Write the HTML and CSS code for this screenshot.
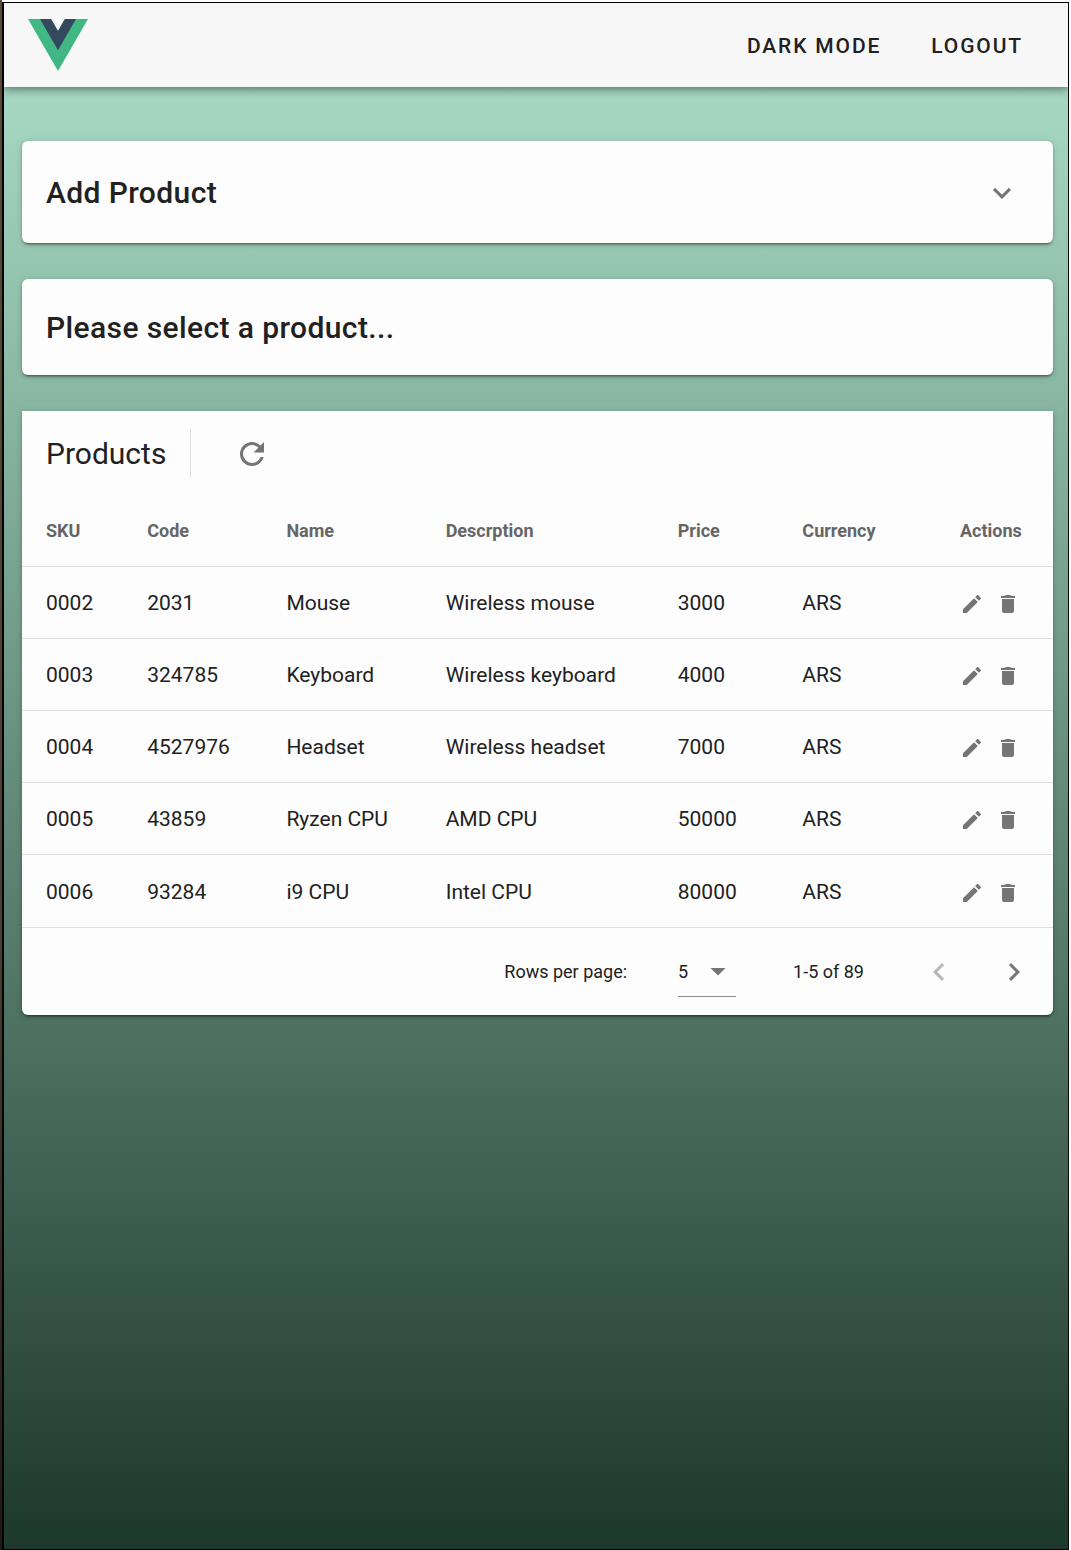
FILE: index.html
```
<!DOCTYPE html>
<html lang="en">
<head>
<meta charset="utf-8">
<title>Products</title>
<link rel="stylesheet" href="styles.css">
</head>
<body>
<svg width="0" height="0" class="sprite" aria-hidden="true">
  <symbol id="pencil" viewBox="0 0 24 24"><path d="M20.71,7.04C21.1,6.65 21.1,6 20.71,5.63L18.37,3.29C18,2.9 17.35,2.9 16.96,3.29L15.12,5.12L18.87,8.87M3,17.25V21H6.75L17.81,9.93L14.06,6.18L3,17.25Z"/></symbol>
  <symbol id="trash" viewBox="0 0 24 24"><path d="M19,4H15.5L14.5,3H9.5L8.5,4H5V6H19M6,19A2,2 0 0,0 8,21H16A2,2 0 0,0 18,19V7H6V19Z"/></symbol>
</svg>
<div class="app">
  <header class="bar">
    <svg class="logo" viewBox="0 0 261.76 226.69"><path fill="#41b883" d="M161.096.001l-30.225 52.351L100.647.001H-.005l130.877 226.688L261.749.001z"/><path fill="#34495e" d="M161.096.001l-30.225 52.351L100.647.001H52.346l78.526 136.01L209.398.001z"/></svg>
    <nav class="nav"><button>DARK MODE</button><button>LOGOUT</button></nav>
  </header>
  <main class="main">
    <section class="card add">
      <h2>Add Product</h2>
      <svg class="icon chev" viewBox="0 0 24 24"><path d="M7.41,8.58L12,13.17L16.59,8.58L18,10L12,16L6,10L7.41,8.58Z"/></svg>
    </section>
    <section class="card select-product"><h2>Please select a product...</h2></section>
    <section class="card products">
      <div class="toolbar">
        <div class="title">Products</div>
        <div class="divider"></div>
        <svg class="icon refresh" viewBox="0 0 24 24"><path d="M17.65,6.35C16.2,4.9 14.21,4 12,4A8,8 0 0,0 4,12A8,8 0 0,0 12,20C15.73,20 18.84,17.45 19.73,14H17.65C16.83,16.33 14.61,18 12,18A6,6 0 0,1 6,12A6,6 0 0,1 12,6C13.66,6 15.14,6.69 16.22,7.78L13,11H20V4L17.65,6.35Z"/></svg>
      </div>
      <table>
        <colgroup><col class="c1"><col class="c2"><col class="c3"><col class="c4"><col class="c5"><col class="c6"><col class="c7"></colgroup>
        <thead><tr><th>SKU</th><th>Code</th><th>Name</th><th>Descrption</th><th>Price</th><th>Currency</th><th>Actions</th></tr></thead>
        <tbody>
          <tr><td>0002</td><td>2031</td><td>Mouse</td><td>Wireless mouse</td><td>3000</td><td>ARS</td><td><div class="actions"><svg><use href="#pencil"/></svg><svg><use href="#trash"/></svg></div></td></tr>
          <tr><td>0003</td><td>324785</td><td>Keyboard</td><td>Wireless keyboard</td><td>4000</td><td>ARS</td><td><div class="actions"><svg><use href="#pencil"/></svg><svg><use href="#trash"/></svg></div></td></tr>
          <tr><td>0004</td><td>4527976</td><td>Headset</td><td>Wireless headset</td><td>7000</td><td>ARS</td><td><div class="actions"><svg><use href="#pencil"/></svg><svg><use href="#trash"/></svg></div></td></tr>
          <tr><td>0005</td><td>43859</td><td>Ryzen CPU</td><td>AMD CPU</td><td>50000</td><td>ARS</td><td><div class="actions"><svg><use href="#pencil"/></svg><svg><use href="#trash"/></svg></div></td></tr>
          <tr class="last"><td>0006</td><td>93284</td><td>i9 CPU</td><td>Intel CPU</td><td>80000</td><td>ARS</td><td><div class="actions"><svg><use href="#pencil"/></svg><svg><use href="#trash"/></svg></div></td></tr>
        </tbody>
      </table>
      <footer class="pager">
        <span>Rows per page:</span>
        <div class="rows"><span>5</span><svg class="icon" viewBox="0 0 24 24"><path d="M7,10L12,15L17,10H7Z"/></svg></div>
        <span class="range">1-5 of 89</span>
        <svg class="icon prev" viewBox="0 0 24 24"><path d="M15.41,16.58L10.83,12L15.41,7.41L14,6L8,12L14,18L15.41,16.58Z"/></svg>
        <svg class="icon next" viewBox="0 0 24 24"><path d="M8.59,16.58L13.17,12L8.59,7.41L10,6L16,12L10,18L8.59,16.58Z"/></svg>
      </footer>
    </section>
  </main>
</div>
</body>
</html>
```
FILE: styles.css
```
* { box-sizing: border-box; }
html { height: 100%; background: #fff; }
body {
  margin: 0;
  height: 1550px;
  padding-top: 2px;
  overflow: hidden;
  font-family: Roboto, "Liberation Sans", sans-serif;
  color: #212121;
  background: linear-gradient(180deg, #5a4c36 0, #4a4030 60%, #1c1a18 100%) 0 0 / 2px 100% no-repeat;
}
.sprite { display: block; height: 0; }
.app {
  margin-left: 2px;
  width: 1067px;
  height: 1548px;
  border: 1px solid #000;
  border-left-width: 2px;
  overflow: hidden;
  background: linear-gradient(180deg, #a6dac4 0, #a4d6c0 110px, #1d382d 100%);
}
.bar {
  height: 84px;
  padding: 0 21px 0 24px;
  display: flex;
  align-items: center;
  justify-content: space-between;
  background: #f7f7f8;
  box-shadow: 0 3px 6px -1px rgba(0,0,0,.3), 0 6px 8px rgba(0,0,0,.1), 0 1px 12px rgba(0,0,0,.08);
}
.logo { width: 60px; height: 52px; }
.nav { display: flex; gap: 2px; }
button {
  border: 0;
  background: none;
  height: 54px;
  padding: 2px 24px 0;
  font: 500 21px Roboto, sans-serif;
  letter-spacing: 1.875px;
  color: #212121;
}
.main { padding: 54px 15px 0 18px; }
.card {
  background: #fdfdfd;
  border-radius: 6px;
  box-shadow: 0 4px 2px -3px rgba(0,0,0,.3), 0 2px 3px rgba(0,0,0,.22), 0 1px 7px rgba(0,0,0,.14);
}
h2 {
  margin: 0;
  padding-top: 1px;
  font-size: 30px;
  font-weight: 500;
  letter-spacing: .39px;
  line-height: 48px;
}
.icon { width: 36px; height: 36px; fill: #757575; flex: none; }
.add {
  height: 102px;
  padding: 1px 33px 0 24px;
  margin-bottom: 36px;
  display: flex;
  align-items: center;
  justify-content: space-between;
}
.select-product { height: 96px; padding: 24px; margin-bottom: 36px; }
.products { border-radius: 0 0 6px 6px; height: 604px; }
.toolbar { height: 84px; display: flex; align-items: center; padding-left: 24px; }
.title { font-size: 30px; }
.divider { width: 1px; height: 48px; margin: 0 42.5px 0 24px; background: #dedede; }
.refresh { margin-top: 1px; }
table { width: 1031px; border-collapse: separate; border-spacing: 0; table-layout: fixed; }
.c1 { width: 101.2px; }
.c2 { width: 139.2px; }
.c3 { width: 159.3px; }
.c4 { width: 232.1px; }
.c5 { width: 124.6px; }
.c6 { width: 157.6px; }
.c7 { width: 117px; }
th, td {
  height: 72px;
  padding: 0 0 0 24px;
  text-align: left;
  font-size: 21px;
  border-bottom: 1px solid #dedede;
  white-space: nowrap;
}
th { font-size: 18px; font-weight: 700; color: #666; }
.last td { height: 73px; padding-top: 1px; }
.actions { display: flex; gap: 12px; padding-top: 3px; }
.actions svg { width: 24px; height: 24px; fill: #757575; }
.pager {
  height: 87px;
  display: flex;
  align-items: center;
  justify-content: flex-end;
  padding-right: 21px;
  font-size: 18px;
}
.rows {
  width: 58px;
  height: 51px;
  margin: 0 57px 0 51px;
  display: flex;
  align-items: center;
  justify-content: space-between;
  border-bottom: 1px solid #8c8c8c;
}
.prev { margin-left: 57px; opacity: .5; }
.next { margin-left: 39px; }
```
